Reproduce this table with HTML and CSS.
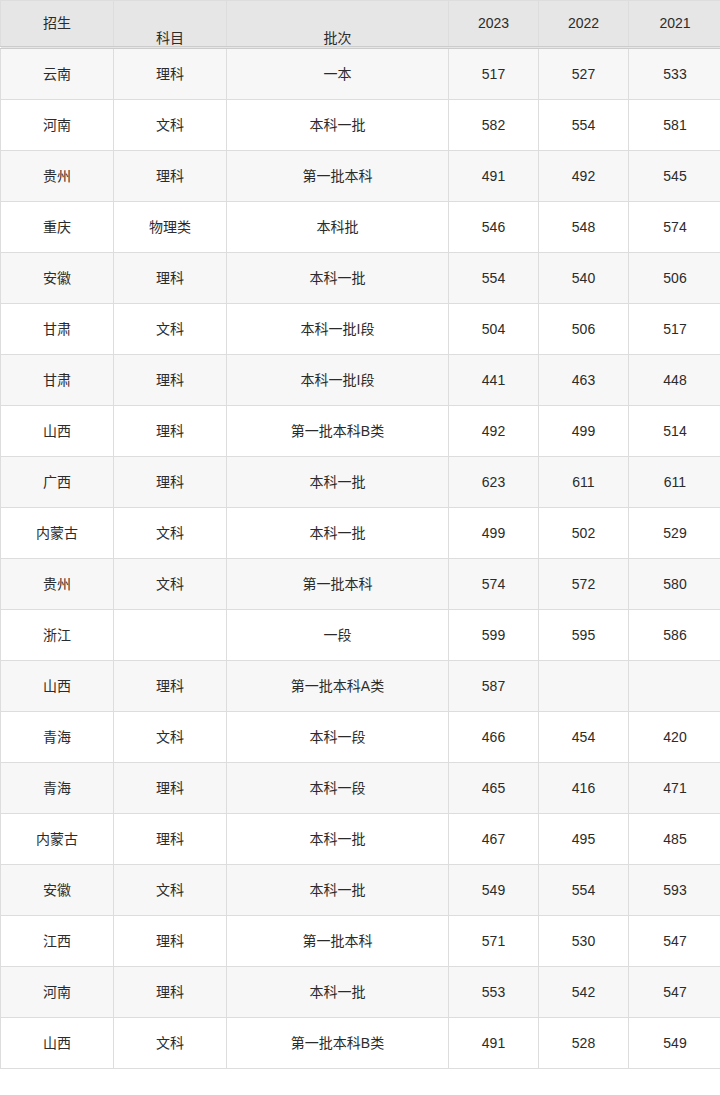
FILE: index.html
```html
<!DOCTYPE html>
<html lang="zh">
<head>
<meta charset="utf-8">
<link rel="stylesheet" href="styles.css">
</head>
<body>
<table class="score">
<colgroup>
<col class="c1"><col class="c2"><col class="c3"><col class="c4"><col class="c5"><col class="c6">
</colgroup>
<thead>
<tr>
<th class="mid">招生</th><th class="bot">科目</th><th class="bot">批次</th><th class="mid">2023</th><th class="mid">2022</th><th class="mid">2021</th>
</tr>
</thead>
<tbody>
<tr><td>云南</td><td>理科</td><td>一本</td><td>517</td><td>527</td><td>533</td></tr>
<tr><td>河南</td><td>文科</td><td>本科一批</td><td>582</td><td>554</td><td>581</td></tr>
<tr><td>贵州</td><td>理科</td><td>第一批本科</td><td>491</td><td>492</td><td>545</td></tr>
<tr><td>重庆</td><td>物理类</td><td>本科批</td><td>546</td><td>548</td><td>574</td></tr>
<tr><td>安徽</td><td>理科</td><td>本科一批</td><td>554</td><td>540</td><td>506</td></tr>
<tr><td>甘肃</td><td>文科</td><td>本科一批I段</td><td>504</td><td>506</td><td>517</td></tr>
<tr><td>甘肃</td><td>理科</td><td>本科一批I段</td><td>441</td><td>463</td><td>448</td></tr>
<tr><td>山西</td><td>理科</td><td>第一批本科B类</td><td>492</td><td>499</td><td>514</td></tr>
<tr><td>广西</td><td>理科</td><td>本科一批</td><td>623</td><td>611</td><td>611</td></tr>
<tr><td>内蒙古</td><td>文科</td><td>本科一批</td><td>499</td><td>502</td><td>529</td></tr>
<tr><td>贵州</td><td>文科</td><td>第一批本科</td><td>574</td><td>572</td><td>580</td></tr>
<tr><td>浙江</td><td></td><td>一段</td><td>599</td><td>595</td><td>586</td></tr>
<tr><td>山西</td><td>理科</td><td>第一批本科A类</td><td>587</td><td></td><td></td></tr>
<tr><td>青海</td><td>文科</td><td>本科一段</td><td>466</td><td>454</td><td>420</td></tr>
<tr><td>青海</td><td>理科</td><td>本科一段</td><td>465</td><td>416</td><td>471</td></tr>
<tr><td>内蒙古</td><td>理科</td><td>本科一批</td><td>467</td><td>495</td><td>485</td></tr>
<tr><td>安徽</td><td>文科</td><td>本科一批</td><td>549</td><td>554</td><td>593</td></tr>
<tr><td>江西</td><td>理科</td><td>第一批本科</td><td>571</td><td>530</td><td>547</td></tr>
<tr><td>河南</td><td>理科</td><td>本科一批</td><td>553</td><td>542</td><td>547</td></tr>
<tr><td>山西</td><td>文科</td><td>第一批本科B类</td><td>491</td><td>528</td><td>549</td></tr>
</tbody>
</table>
</body>
</html>
```
FILE: styles.css
```css
html, body {
  margin: 0;
  padding: 0;
  background: #ffffff;
}
body {
  font-family: "Liberation Sans", Arial, "Noto Sans CJK SC", sans-serif;
  font-size: 14px;
  color: #2b2b2b;
}
.score {
  border-collapse: collapse;
  table-layout: fixed;
  width: 721px;
}
.c1 { width: 113px; }
.c2 { width: 113px; }
.c3 { width: 222px; }
.c4 { width: 90px; }
.c5 { width: 90px; }
.c6 { width: 93px; }
.score th,
.score td {
  border: 1px solid #dddddd;
  text-align: center;
  padding: 0;
  line-height: 20px;
}
.score th {
  background: #e6e6e6;
  font-weight: normal;
  border-bottom: 3px double #cccccc;
}
.score th.mid {
  vertical-align: top;
  height: 33px;
  padding-top: 12px;
}
.score th.bot {
  vertical-align: bottom;
  height: 45px;
  line-height: 16px;
}
.score td {
  height: 50px;
  vertical-align: middle;
}
.score tbody tr:nth-child(odd) td {
  background: #f7f7f7;
}
.score tbody tr:nth-child(even) td {
  background: #ffffff;
}
```
